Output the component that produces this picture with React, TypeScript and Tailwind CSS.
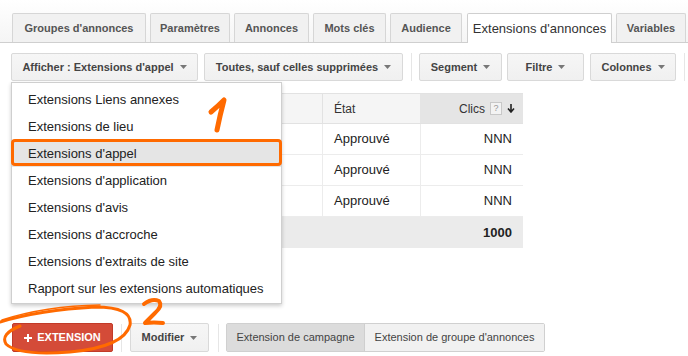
import React from "react";

const tabs = [
  { label: "Groupes d'annonces", w: "w-[134px]" },
  { label: "Paramètres", w: "w-[80px]" },
  { label: "Annonces", w: "w-[75px]" },
  { label: "Mots clés", w: "w-[73px]" },
  { label: "Audience", w: "w-[72px]" },
  { label: "Extensions d'annonces", w: "w-[145px]", active: true },
  { label: "Variables", w: "w-[70px]" },
];

const menuItems = [
  "Extensions Liens annexes",
  "Extensions de lieu",
  "Extensions d'appel",
  "Extensions d'application",
  "Extensions d'avis",
  "Extensions d'accroche",
  "Extensions d'extraits de site",
  "Rapport sur les extensions automatiques",
];

const Caret = ({ color = "#777" }: { color?: string }) => (
  <svg width="7" height="4" viewBox="0 0 7 4" className="shrink-0">
    <path d="M0 0h7L3.5 4z" fill={color} />
  </svg>
);

const ToolButton = ({ label, className = "" }: { label: string; className?: string }) => (
  <button
    className={`h-[28px] shrink-0 whitespace-nowrap flex items-center justify-center gap-[6px] px-[11px] rounded-[2px] border border-[#d9d9d9] bg-gradient-to-b from-[#f6f6f6] to-[#f0f0f0] text-[11px] font-bold text-[#444] ${className}`}
  >
    {label}
    <Caret />
  </button>
);

const Sep = () => <div className="w-px h-[28px] bg-[#e6e6e6]" />;

export default function App() {
  return (
    <div className="relative w-[688px] h-[356px] overflow-hidden bg-white font-['Liberation_Sans',Arial,sans-serif]">
      {/* tabs */}
      <div className="flex gap-[4px] pl-[12px] pt-[13px] border-b border-[#cfcfcf] bg-gradient-to-b from-white to-[#f5f5f5]">
        {tabs.map((t) =>
          t.active ? (
            <div
              key={t.label}
              className={`${t.w} h-[30px] -mb-px ml-[1px] shrink-0 whitespace-nowrap flex items-center justify-center border border-b-0 border-[#cfcfcf] rounded-t-[2px] bg-white text-[13px] text-[#333]`}
            >
              {t.label}
            </div>
          ) : (
            <div
              key={t.label}
              className={`${t.w} h-[29px] shrink-0 whitespace-nowrap flex items-center justify-center border border-b-0 border-[#d6d6d6] rounded-t-[2px] bg-[#f1f1f1] text-[11px] font-bold text-[#555]`}
            >
              {t.label}
            </div>
          )
        )}
      </div>

      {/* toolbar */}
      <div className="flex items-center mt-[10px] pl-[11px]">
        <ToolButton label="Afficher : Extensions d'appel" className="w-[187px]" />
        <ToolButton label="Toutes, sauf celles supprimées" className="ml-[6px] w-[199px]" />
        <div className="ml-[8px] mr-[7px]">
          <Sep />
        </div>
        <ToolButton label="Segment" className="w-[83px]" />
        <ToolButton label="Filtre" className="ml-[5px] w-[77px]" />
        <ToolButton label="Colonnes" className="ml-[6px] w-[86px]" />
        <div className="ml-[8px]">
          <Sep />
        </div>
      </div>

      {/* table */}
      <div className="mt-[12px] ml-[11px] w-[512px] text-[13px] text-[#222]">
        <div className="flex h-[31px] border-t border-b border-[#e2e2e2] bg-[#f5f5f5]">
          <div className="w-[311px]" />
          <div className="w-[98px] flex items-center pl-[11px] border-l border-[#e2e2e2] text-[12px] text-[#333]">
            État
          </div>
          <div className="flex-1 flex items-center justify-end gap-[5px] pr-[8px] bg-[#e5e5e5] text-[12px] text-[#333]">
            Clics
            <span className="w-[12px] h-[13px] flex items-center justify-center border border-[#c8c8c8] bg-[#f3f3f3] text-[9px] text-[#999]">
              ?
            </span>
            <svg width="8" height="9" viewBox="0 0 8 9">
              <path d="M4 0v7M1 4.5l3 3.5 3-3.5" stroke="#222" strokeWidth="1.6" fill="none" />
            </svg>
          </div>
        </div>
        {[0, 1, 2].map((i) => (
          <div key={i} className="flex h-[31px] border-b border-[#ececec]">
            <div className="w-[311px]" />
            <div className="w-[98px] flex items-center pl-[11px] border-l border-[#ececec]">Approuvé</div>
            <div className="flex-1 flex items-center justify-end pr-[11px] border-l border-[#ececec]">NNN</div>
          </div>
        ))}
        <div className="flex h-[31px] bg-[#ebebeb]">
          <div className="flex-1" />
          <div className="w-[103px] flex items-center justify-end pr-[11px] font-bold">1000</div>
        </div>
      </div>

      {/* bottom bar */}
      <div className="flex items-center mt-[75px] pl-[12px]">
        <button className="h-[29px] w-[101px] shrink-0 flex items-center justify-center gap-[5px] rounded-[2px] border border-[#c23a28] bg-[#d44b38] text-[11px] font-bold text-white">
          <svg width="8" height="8" viewBox="0 0 8 8">
            <path d="M4 0v8M0 4h8" stroke="#fff" strokeWidth="2" />
          </svg>
          EXTENSION
        </button>
        <div className="ml-[8px] mr-[8px]">
          <Sep />
        </div>
        <ToolButton label="Modifier" className="h-[29px] w-[79px]" />
        <div className="ml-[9px] mr-[7px]">
          <Sep />
        </div>
        <div className="flex h-[29px] shrink-0 whitespace-nowrap rounded-[2px] border border-[#d0d0d0] text-[11px] text-[#444]">
          <div className="w-[138px] flex items-center justify-center bg-[#dcdcdc] border-r border-[#cfcfcf]">
            Extension de campagne
          </div>
          <div className="w-[179px] flex items-center justify-center bg-[#f1f1f1]">
            Extension de groupe d'annonces
          </div>
        </div>
      </div>

      {/* dropdown menu */}
      <div className="absolute left-[11px] top-[82px] w-[271px] pt-[3px] pb-[1px] bg-white border border-[#cfcfcf] shadow-[0_2px_4px_rgba(0,0,0,0.2)] text-[13px] text-[#222]">
        {menuItems.map((m) => (
          <div
            key={m}
            className={`h-[27px] flex items-center pl-[16px] whitespace-nowrap ${m === "Extensions d'appel" ? "bg-[#e5e5e5]" : ""}`}
          >
            {m}
          </div>
        ))}
      </div>

      {/* orange annotations */}
      <div className="absolute left-[11px] top-[139px] w-[271px] h-[27px] rounded-[4px] border-[3px] border-[#ff6a00] pointer-events-none" />
      <svg className="absolute inset-0 pointer-events-none" width="688" height="356" viewBox="0 0 688 356">
        <g fill="none" stroke="#ff6a00" strokeLinecap="round" strokeLinejoin="round">
          <path d="M211 112 Q218 106 224 100 Q220 115 217 130" strokeWidth="5" />
          <path d="M144 304 Q152 298 159 301 Q163 306 155 313 L145 323 Q154 322 163 323" strokeWidth="4" />
          <path
            d="M0 322 Q40 310 95 307 Q133 307 130 325 Q124 347 70 352 Q18 356 6 344 Q0 334 20 326"
            strokeWidth="3"
          />
          <path d="M2 320 Q45 306 100 305" strokeWidth="1.5" />
        </g>
      </svg>
    </div>
  );
}
